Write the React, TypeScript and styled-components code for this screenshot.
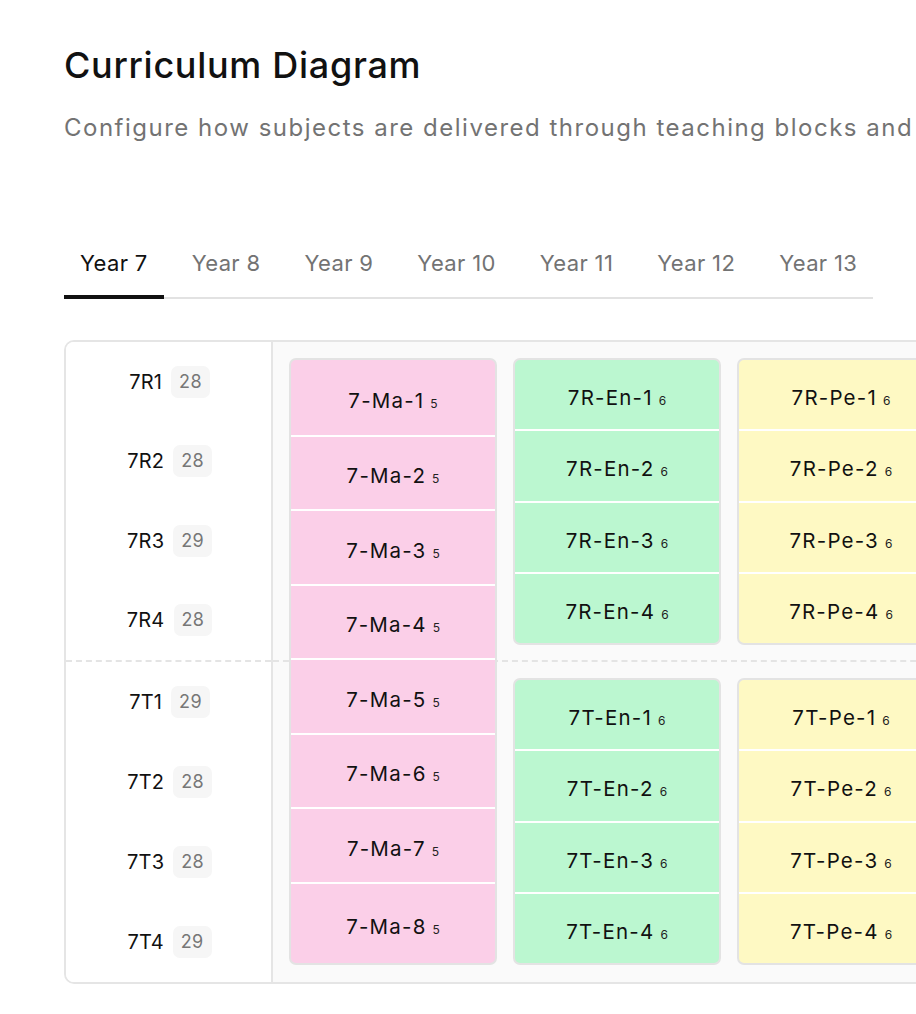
import React from "react";
import styled, { createGlobalStyle } from "styled-components";

const Global = createGlobalStyle`
  html, body { margin: 0; padding: 0; overflow: hidden; background: #ffffff; }
  body { font-family: Inter, "Noto Sans", sans-serif; color: #111; }
  * { box-sizing: border-box; }
`;

const Page = styled.div`
  padding: 40px 0 0 64px;
  width: max-content;
`;

const Title = styled.h1`
  margin: 0;
  font-size: 36px;
  line-height: 50px;
  font-weight: 500;
  letter-spacing: 0.7px;
  color: #111;
`;

const Subtitle = styled.p`
  margin: 22px 0 0;
  font-size: 24px;
  line-height: 32px;
  color: #737373;
  white-space: nowrap;
  letter-spacing: 1.5px;
`;

const TabList = styled.div`
  display: inline-flex;
  gap: 12px;
  margin-top: 93px;
  border-bottom: 2px solid #e2e2e2;
`;

const Tab = styled.button<{ $active?: boolean }>`
  font-family: Inter, sans-serif;
  font-size: 22px;
  line-height: 28px;
  padding: 12px 16px 18px;
  margin-bottom: -2px;
  background: none;
  border: none;
  border-bottom: 4px solid ${(p) => (p.$active ? "#111" : "transparent")};
  color: ${(p) => (p.$active ? "#111" : "#737373")};
  cursor: pointer;
  letter-spacing: 0.35px;
`;

const Diagram = styled.div`
  display: flex;
  margin-top: 41px;
  border: 2px solid #e5e5e5;
  border-radius: 10px;
  overflow: hidden;
  width: max-content;
`;

const LabelColumn = styled.div`
  width: 207px;
  background: #fff;
  border-right: 2px solid #e5e5e5;
`;

const LabelGroup = styled.div<{ $divider?: boolean }>`
  height: 320px;
  display: grid;
  grid-template-rows: repeat(4, 1fr);
  border-bottom: ${(p) => (p.$divider ? "2px dashed #e4e4e4" : "none")};
`;

const LabelRow = styled.div`
  display: flex;
  align-items: center;
  justify-content: center;
  gap: 9px;
  padding-left: 2px;
`;

const ClassName = styled.span`
  font-size: 20px;
  color: #111;
  letter-spacing: 0.2px;
`;

const Count = styled.span`
  font-size: 18px;
  color: #777;
  background: #f6f6f6;
  border-radius: 7px;
  padding: 0 8px;
  line-height: 32px;
  letter-spacing: 0.3px;
`;

const Board = styled.div`
  display: grid;
  grid-template-columns: repeat(4, 208px);
  grid-template-rows: 320px 320px;
  column-gap: 16px;
  padding: 0 16px;
  background: #fafafa;
`;

const Band = styled.div<{ $row: number; $divider?: boolean }>`
  grid-column: 1 / -1;
  grid-row: ${(p) => p.$row};
  margin: 0 -16px;
  border-bottom: ${(p) => (p.$divider ? "2px dashed #e4e4e4" : "none")};
`;

const Card = styled.div<{ $col: number; $row: string; $bg: string }>`
  grid-column: ${(p) => p.$col};
  grid-row: ${(p) => p.$row};
  margin: 16px 0 17px;
  display: flex;
  flex-direction: column;
  background: ${(p) => p.$bg};
  border: 2px solid #e3e3e3;
  border-radius: 7px;
  overflow: hidden;
`;

const Cell = styled.div<{ $h?: number }>`
  flex: ${(p) => (p.$h ? `0 0 ${p.$h}px` : "1")};
  display: flex;
  align-items: center;
  justify-content: center;
  gap: 6px;
  padding-top: 6px;
  & + & {
    border-top: 2px solid #ffffff;
  }
  &:last-child {
    flex: 1;
  }
`;

const CellName = styled.span`
  font-size: 20.5px;
  color: #111;
  letter-spacing: 1.2px;
`;

const Periods = styled.span`
  font-size: 12px;
  color: #222;
  margin-top: 6px;
`;

const tabs = ["Year 7", "Year 8", "Year 9", "Year 10", "Year 11", "Year 12", "Year 13"];

const groups = [
  { key: "R", rows: [["7R1", 28], ["7R2", 28], ["7R3", 29], ["7R4", 28]] },
  { key: "T", rows: [["7T1", 29], ["7T2", 28], ["7T3", 28], ["7T4", 29]] },
];

const PINK = "#fbcfe8";
const GREEN = "#bbf7d0";
const YELLOW = "#fef9c3";
const BLUE = "#bfdbfe";

type CardDef = { col: number; row: string; bg: string; cells: string[]; periods: number; cellH?: number };

const cards: CardDef[] = [
  { col: 1, row: "1 / 3", bg: PINK, cells: [1, 2, 3, 4, 5, 6, 7, 8].map((n) => `7-Ma-${n}`), periods: 5, cellH: 74.5 },
  { col: 2, row: "1", bg: GREEN, cells: [1, 2, 3, 4].map((n) => `7R-En-${n}`), periods: 6 },
  { col: 2, row: "2", bg: GREEN, cells: [1, 2, 3, 4].map((n) => `7T-En-${n}`), periods: 6 },
  { col: 3, row: "1", bg: YELLOW, cells: [1, 2, 3, 4].map((n) => `7R-Pe-${n}`), periods: 6 },
  { col: 3, row: "2", bg: YELLOW, cells: [1, 2, 3, 4].map((n) => `7T-Pe-${n}`), periods: 6 },
  { col: 4, row: "1", bg: BLUE, cells: [1, 2, 3, 4].map((n) => `7R-Sc-${n}`), periods: 4 },
  { col: 4, row: "2", bg: BLUE, cells: [1, 2, 3, 4].map((n) => `7T-Sc-${n}`), periods: 4 },
];

export default function App() {
  return (
    <>
      <Global />
      <Page>
        <Title>Curriculum Diagram</Title>
        <Subtitle>
          Configure how subjects are delivered through teaching blocks and option groups across each year.
        </Subtitle>
        <TabList>
          {tabs.map((t, i) => (
            <Tab key={t} $active={i === 0}>
              {t}
            </Tab>
          ))}
        </TabList>
        <Diagram>
          <LabelColumn>
            {groups.map((g, gi) => (
              <LabelGroup key={g.key} $divider={gi === 0}>
                {g.rows.map(([name, count]) => (
                  <LabelRow key={name as string}>
                    <ClassName>{name}</ClassName>
                    <Count>{count}</Count>
                  </LabelRow>
                ))}
              </LabelGroup>
            ))}
          </LabelColumn>
          <Board>
            <Band $row={1} $divider />
            <Band $row={2} />
            {cards.map((c, i) => (
              <Card key={i} $col={c.col} $row={c.row} $bg={c.bg}>
                {c.cells.map((name) => (
                  <Cell key={name} $h={c.cellH}>
                    <CellName>{name}</CellName>
                    <Periods>{c.periods}</Periods>
                  </Cell>
                ))}
              </Card>
            ))}
          </Board>
        </Diagram>
      </Page>
    </>
  );
}
